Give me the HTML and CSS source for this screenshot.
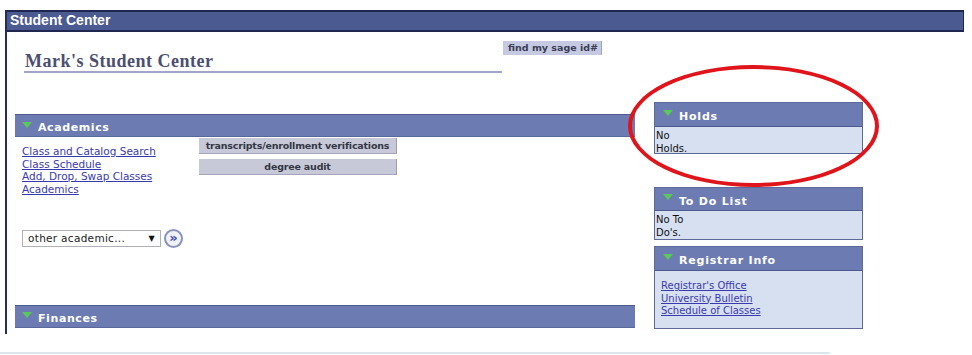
FILE: index.html
```html
<!DOCTYPE html>
<html>
<head>
<meta charset="utf-8">
<link rel="stylesheet" href="styles.css">
</head>
<body>
<div class="frame">
  <div class="topbar">Student Center</div>
  <div class="content">
    <div class="left">
      <div class="title-row">
        <h1 class="page-title">Mark's Student Center</h1>
        <span class="btn-sage">find my sage id#</span>
      </div>
      <div class="section">
        <div class="sec-head"><span class="tri"></span>Academics</div>
        <div class="acad-body">
          <div class="acad-links">
            <a href="#">Class and Catalog Search</a>
            <a href="#">Class Schedule</a>
            <a href="#">Add, Drop, Swap Classes</a>
            <a href="#">Academics</a>
          </div>
          <div class="acad-btns">
            <span class="gbtn">transcripts/enrollment verifications</span>
            <span class="gbtn">degree audit</span>
          </div>
        </div>
        <div class="select-row">
          <div class="select">other academic...<span class="sel-arrow">&#9660;</span></div>
          <span class="go">&#187;</span>
        </div>
      </div>
      <div class="sec-head fin"><span class="tri"></span>Finances</div>
    </div>
    <div class="right">
      <div class="box holds">
        <div class="box-head"><span class="tri"></span>Holds</div>
        <div class="box-body">No<br>Holds.</div>
      </div>
      <div class="box todo">
        <div class="box-head"><span class="tri"></span>To Do List</div>
        <div class="box-body">No To<br>Do's.</div>
      </div>
      <div class="box reg">
        <div class="box-head"><span class="tri"></span>Registrar Info</div>
        <div class="box-body links">
          <a href="#">Registrar's Office</a>
          <a href="#">University Bulletin</a>
          <a href="#">Schedule of Classes</a>
        </div>
      </div>
    </div>
  </div>
</div>
<div class="bottom-line"></div>
<div class="circle"></div>
</body>
</html>
```
FILE: styles.css
```css
html, body { margin: 0; padding: 0; background: #fff; }
body { font-family: "DejaVu Sans", Verdana, sans-serif; position: relative; width: 972px; height: 355px; overflow: hidden; }

.frame {
  margin: 10px 0 0 5px;
  width: 959px;
  border-left: 2px solid #262d5a;
  height: 324px;
  box-sizing: border-box;
}
.topbar {
  height: 22px;
  box-sizing: border-box;
  background: #4b5a90;
  border-top: 2px solid #1f2750;
  border-bottom: 2px solid #1f2750;
  border-right: 1px solid #1f2750;
  color: #fff;
  font-family: "Liberation Sans", Arial, sans-serif;
  font-weight: bold;
  font-size: 14px;
  line-height: 17px;
  padding-left: 3px;
}
.content { display: flex; padding-left: 8px; }
.left { width: 620px; padding-top: 9px; }
.title-row { display: flex; align-items: flex-start; margin-left: 9px; }
.page-title {
  margin: 0;
  width: 478px;
  height: 32px;
  box-sizing: border-box;
  border-bottom: 2px solid #a2a4c9;
  font-family: "Liberation Serif", Georgia, serif;
  font-weight: bold;
  font-size: 18px;
  letter-spacing: 0.5px;
  color: #4c4f6f;
  padding: 10px 0 0 1px;
  line-height: 20px;
}
.btn-sage {
  margin-left: 1px;
  background: #c5cae2;
  color: #3a3d55;
  font-size: 9.5px;
  font-weight: bold;
  height: 14px;
  line-height: 14px;
  padding: 0 3px 0 5px;
  border-right: 1px solid #9ea3c0;
}
.section { margin-top: 41px; }
.sec-head {
  height: 23px;
  box-sizing: border-box;
  background: #6c7cb2;
  border-top: 1px solid #4d5b8e;
  border-bottom: 1px solid #5a6899;
  color: #fff;
  font-weight: bold;
  font-size: 11px;
  letter-spacing: 0.6px;
  display: flex;
  align-items: center;
  padding: 4px 0 0 7px;
}
.tri {
  width: 0; height: 0;
  border-left: 5px solid transparent;
  border-right: 5px solid transparent;
  border-top: 6px solid #5cc65c;
  margin-right: 6px;
  position: relative;
  top: -3px;
}
.box-head .tri { top: -4px; }
.acad-body { display: flex; }
.acad-links { display: flex; flex-direction: column; padding: 8px 0 0 7px; width: 177px; }
.acad-links a, .links a {
  font-size: 10.5px;
  line-height: 12.7px;
  color: #3a3ab0;
  text-decoration: underline;
}
.acad-btns { display: flex; flex-direction: column; gap: 5px; padding-top: 1px; }
.gbtn {
  width: 198px;
  height: 16px;
  box-sizing: border-box;
  background: #c8c9d8;
  border-right: 1px solid #9c9db3;
  border-bottom: 1px solid #a4a5ba;
  color: #333645;
  font-weight: bold;
  font-size: 9.5px;
  letter-spacing: -0.2px;
  text-align: center;
  line-height: 15px;
  white-space: nowrap;
}
.select-row { display: flex; align-items: center; margin: 33px 0 0 7px; height: 20px; }
.select {
  width: 139px;
  height: 17px;
  box-sizing: border-box;
  border: 1px solid #b0b0b8;
  font-size: 10.5px;
  letter-spacing: 0.3px;
  color: #222;
  line-height: 15px;
  padding-left: 5px;
  position: relative;
  display: flex;
  justify-content: space-between;
  padding-right: 5px;
}
.sel-arrow { font-size: 8px; color: #111; }
.go {
  width: 15px; height: 15px;
  border: 2px solid #8a94bc;
  border-radius: 50%;
  margin-left: 3px;
  color: #3a4aa8;
  font-size: 13px;
  line-height: 13px;
  text-align: center;
  font-weight: bold;
  background: #f0f2f8;
}
.sec-head.fin { margin-top: 56px; }

.right { margin-left: 19px; width: 209px; padding-top: 70px; display: flex; flex-direction: column; }
.box { border: 1px solid #5d6a99; background: #d6e0f0; }
.box-head {
  height: 24px;
  box-sizing: border-box;
  background: #6c7cb2;
  border-bottom: 1px solid #4d5a8c;
  color: #fff;
  font-weight: bold;
  font-size: 11px;
  letter-spacing: 0.8px;
  display: flex;
  align-items: center;
  padding: 4px 0 0 8px;
}
.todo .box-head { height: 23px; }
.box-body { font-size: 10px; line-height: 12.5px; color: #111; padding: 3px 1px 0; box-sizing: border-box; }
.holds .box-body { height: 26px; }
.todo { margin-top: 33px; }
.todo .box-body { height: 28px; }
.reg { margin-top: 6px; }
.box-body.links { display: flex; flex-direction: column; padding: 9px 0 0 6px; height: 57px; }
.box-body.links a { font-size: 10px; line-height: 12.5px; }

.bottom-line { margin-top: 18px; width: 830px; height: 2px; background: #dbe5ec; }

.circle {
  position: absolute;
  left: 628px;
  top: 65px;
  width: 251px;
  height: 122px;
  box-sizing: border-box;
  border: 4.5px solid #e0151c;
  border-radius: 50%;
  pointer-events: none;
}
```
